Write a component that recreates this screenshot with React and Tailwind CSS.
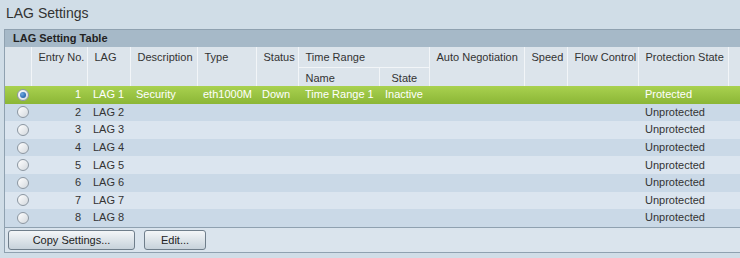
import React from 'react';

const cols = [26, 56, 43, 67, 59, 42, 81, 50, 95, 43, 71, 90, 40];

const rows = [
  { no: 1, lag: 'LAG 1', desc: 'Security', type: 'eth1000M', status: 'Down', trName: 'Time Range 1', trState: 'Inactive', prot: 'Protected' },
  { no: 2, lag: 'LAG 2', prot: 'Unprotected' },
  { no: 3, lag: 'LAG 3', prot: 'Unprotected' },
  { no: 4, lag: 'LAG 4', prot: 'Unprotected' },
  { no: 5, lag: 'LAG 5', prot: 'Unprotected' },
  { no: 6, lag: 'LAG 6', prot: 'Unprotected' },
  { no: 7, lag: 'LAG 7', prot: 'Unprotected' },
  { no: 8, lag: 'LAG 8', prot: 'Unprotected' },
];

const Radio = ({ checked }) => (
  <span className="inline-flex w-[12px] h-[12px] rounded-full border border-[#8b96a1] bg-gradient-to-br from-white to-[#d4d9de] items-center justify-center">
    {checked && (
      <span className="w-[6px] h-[6px] rounded-full bg-[radial-gradient(circle_at_35%_35%,#6fa8e0,#0f4f9a)]" />
    )}
  </span>
);

const th = 'text-left font-normal align-top pl-[7px] pt-[4px] leading-[13px] border-x border-[#f2f5f8] whitespace-nowrap';
const td = 'pl-[6px] whitespace-nowrap overflow-hidden';

const App = () => {
  return (
    <div
      className="w-[740px] h-[258px] overflow-hidden bg-[#d0dde7] text-[#333] text-[11px]"
      style={{ fontFamily: '"Liberation Sans", Arial, sans-serif' }}
    >
      <div className="h-[29px] pl-[6px] pt-[4px] text-[14px] leading-[18px] text-[#333]">LAG Settings</div>

      <div className="ml-[4px] w-[780px] border border-r-0 border-[#8fa1b0]">
        <div className="h-[17px] bg-[#a6b9c8] pl-[8px] font-bold leading-[17px] text-[#222]">LAG Setting Table</div>

        <table className="table-fixed border-collapse leading-[13px]">
          <colgroup>
            {cols.map((w, i) => (
              <col key={i} style={{ width: w }} />
            ))}
          </colgroup>
          <thead className="bg-[#dce4eb]">
            <tr className="h-[20px]">
              <th rowSpan={2} className={th + ' border-l-0'} />
              <th rowSpan={2} className={th}>Entry No.</th>
              <th rowSpan={2} className={th}>LAG</th>
              <th rowSpan={2} className={th}>Description</th>
              <th rowSpan={2} className={th}>Type</th>
              <th rowSpan={2} className={th}>Status</th>
              <th colSpan={2} className={th}>Time Range</th>
              <th rowSpan={2} className={th}>Auto Negotiation</th>
              <th rowSpan={2} className={th}>Speed</th>
              <th rowSpan={2} className={th}>Flow Control</th>
              <th rowSpan={2} className={th}>Protection State</th>
              <th rowSpan={2} className={th} />
            </tr>
            <tr className="h-[19px]">
              <th className={th + ' border-t pt-[3px]'}>Name</th>
              <th className={th + ' border-t pt-[3px] pl-[12px]'}>State</th>
            </tr>
          </thead>
          <tbody>
            {rows.map((r, i) => {
              const sel = i === 0;
              const bg = sel
                ? 'bg-gradient-to-b from-[#a9d14f] to-[#8bb636] text-white'
                : i % 2 === 0
                ? 'bg-[#dbe5ef]'
                : 'bg-[#cad9e7]';
              return (
                <tr key={r.no} className={'h-[17.6px] ' + bg}>
                  <td className="pl-[12px] p-0">
                    <div className="flex items-center h-[17px]">
                      <Radio checked={sel} />
                    </div>
                  </td>
                  <td className="text-right pr-[6px]">{r.no}</td>
                  <td className={td}>{r.lag}</td>
                  <td className={td}>{r.desc}</td>
                  <td className={td}>{r.type}</td>
                  <td className={td}>{r.status}</td>
                  <td className={td + ' pl-[7px]'}>{r.trName}</td>
                  <td className={td}>{r.trState}</td>
                  <td className={td} />
                  <td className={td} />
                  <td className={td} />
                  <td className={td + ' pl-[7px]'}>{r.prot}</td>
                  <td />
                </tr>
              );
            })}
          </tbody>
        </table>

        <div className="h-[25px] border-t border-[#8fa1b0] bg-[#dae4ed] flex items-center gap-[9px] pl-[3px]">
          <button className="w-[127px] h-[20px] rounded-[3px] border border-[#6f7e8b] bg-gradient-to-b from-[#f3f6f8] to-[#c7d2db] text-[#222] text-[11px]">
            Copy Settings...
          </button>
          <button className="w-[62px] h-[20px] rounded-[3px] border border-[#6f7e8b] bg-gradient-to-b from-[#f3f6f8] to-[#c7d2db] text-[#222] text-[11px]">
            Edit...
          </button>
        </div>
      </div>
    </div>
  );
};

export default App;
